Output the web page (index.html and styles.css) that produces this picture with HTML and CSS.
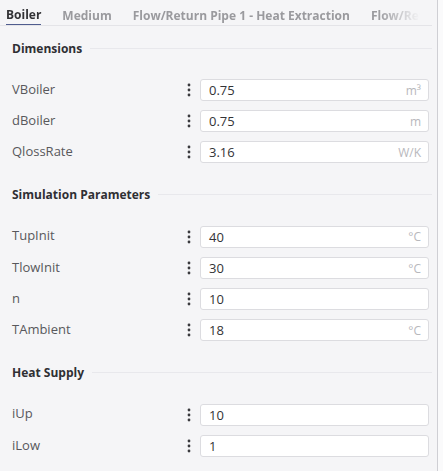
FILE: index.html
```html
<!DOCTYPE html>
<html>
<head>
<meta charset="utf-8">
<link rel="stylesheet" href="styles.css">
</head>
<body>
<div class="panel">
  <div class="tabbar">
    <div class="tabs">
      <span class="tab active">Boiler</span>
      <span class="tab">Medium</span>
      <span class="tab">Flow/Return Pipe 1 - Heat Extraction</span>
      <span class="tab last">Flow/Return Pipe 2 - Heat Supply</span>
    </div>
  </div>
  <div class="content">
    <section class="group">
      <h3 class="heading"><span>Dimensions</span></h3>
      <div class="rows">
        <div class="row"><span class="label">VBoiler</span><span class="dots"><svg width="6" height="14" viewBox="0 0 6 14"><circle cx="3" cy="2" r="1.4"/><circle cx="3" cy="7" r="1.4"/><circle cx="3" cy="12" r="1.4"/></svg></span><div class="field"><span class="val">0.75</span><span class="unit">m³</span></div></div>
        <div class="row"><span class="label">dBoiler</span><span class="dots"><svg width="6" height="14" viewBox="0 0 6 14"><circle cx="3" cy="2" r="1.4"/><circle cx="3" cy="7" r="1.4"/><circle cx="3" cy="12" r="1.4"/></svg></span><div class="field"><span class="val">0.75</span><span class="unit">m</span></div></div>
        <div class="row"><span class="label">QlossRate</span><span class="dots"><svg width="6" height="14" viewBox="0 0 6 14"><circle cx="3" cy="2" r="1.4"/><circle cx="3" cy="7" r="1.4"/><circle cx="3" cy="12" r="1.4"/></svg></span><div class="field"><span class="val">3.16</span><span class="unit">W/K</span></div></div>
      </div>
    </section>
    <section class="group">
      <h3 class="heading"><span>Simulation Parameters</span></h3>
      <div class="rows">
        <div class="row"><span class="label">TupInit</span><span class="dots"><svg width="6" height="14" viewBox="0 0 6 14"><circle cx="3" cy="2" r="1.4"/><circle cx="3" cy="7" r="1.4"/><circle cx="3" cy="12" r="1.4"/></svg></span><div class="field"><span class="val">40</span><span class="unit">°C</span></div></div>
        <div class="row"><span class="label">TlowInit</span><span class="dots"><svg width="6" height="14" viewBox="0 0 6 14"><circle cx="3" cy="2" r="1.4"/><circle cx="3" cy="7" r="1.4"/><circle cx="3" cy="12" r="1.4"/></svg></span><div class="field"><span class="val">30</span><span class="unit">°C</span></div></div>
        <div class="row"><span class="label">n</span><span class="dots"><svg width="6" height="14" viewBox="0 0 6 14"><circle cx="3" cy="2" r="1.4"/><circle cx="3" cy="7" r="1.4"/><circle cx="3" cy="12" r="1.4"/></svg></span><div class="field"><span class="val">10</span></div></div>
        <div class="row"><span class="label">TAmbient</span><span class="dots"><svg width="6" height="14" viewBox="0 0 6 14"><circle cx="3" cy="2" r="1.4"/><circle cx="3" cy="7" r="1.4"/><circle cx="3" cy="12" r="1.4"/></svg></span><div class="field"><span class="val">18</span><span class="unit">°C</span></div></div>
      </div>
    </section>
    <section class="group">
      <h3 class="heading"><span>Heat Supply</span></h3>
      <div class="rows">
        <div class="row"><span class="label">iUp</span><span class="dots"><svg width="6" height="14" viewBox="0 0 6 14"><circle cx="3" cy="2" r="1.4"/><circle cx="3" cy="7" r="1.4"/><circle cx="3" cy="12" r="1.4"/></svg></span><div class="field"><span class="val">10</span></div></div>
        <div class="row"><span class="label">iLow</span><span class="dots"><svg width="6" height="14" viewBox="0 0 6 14"><circle cx="3" cy="2" r="1.4"/><circle cx="3" cy="7" r="1.4"/><circle cx="3" cy="12" r="1.4"/></svg></span><div class="field"><span class="val">1</span></div></div>
      </div>
    </section>
  </div>
</div>
</body>
</html>
```
FILE: styles.css
```css
* { box-sizing: border-box; }
html, body { margin: 0; padding: 0; }
body {
  background: #fafafb;
  font-family: "Open Sans", "Noto Sans", sans-serif;
  width: 443px;
  height: 471px;
  overflow: hidden;
}
.panel {
  width: 438px;
  height: 471px;
  background: #f5f5f7;
  border-right: 1px solid #cfcfd4;
  padding-right: 5px;
}
.tabbar {
  height: 26px;
  border-bottom: 1px solid #e4e4e8;
  overflow: hidden;
}
.tabs {
  display: flex;
  gap: 21px;
  padding-left: 6px;
  white-space: nowrap;
  width: 420px;
  overflow: hidden;
  -webkit-mask-image: linear-gradient(to right, #000 calc(100% - 42px), transparent 100%);
  mask-image: linear-gradient(to right, #000 calc(100% - 42px), transparent 100%);
}
.tab {
  font-size: 12px;
  font-weight: 700;
  color: #9a9a9e;
  height: 26px;
  line-height: 32px;
  flex: none;
}
.tab.last {
  flex: 1 1 auto;
  min-width: 0;
  overflow: hidden;
}
.tab.active {
  color: #333336;
  border-bottom: 2px solid #4f5c8e;
  line-height: 30px;
}
.content {
  padding: 12px 0 0 12px;
}
.group { margin-bottom: 21.5px; }
.heading {
  margin: 0 0 21px 0;
  height: 20px;
  display: flex;
  align-items: center;
  gap: 8px;
  font-size: 12px;
  font-weight: 700;
  color: #2f2f33;
}
.heading::after {
  content: "";
  flex: 1;
  height: 1px;
  background: #e8e8ec;
}
.rows {
  display: flex;
  flex-direction: column;
  gap: 9.2px;
  padding-right: 3px;
}
.row {
  display: grid;
  grid-template-columns: 1fr 10px 229px;
  column-gap: 6px;
  align-items: center;
  height: 22px;
}
.label {
  font-size: 13px;
  color: #58585c;
  margin-bottom: 3px;
}
.dots {
  display: flex;
  justify-content: center;
  fill: #3a3a3e;
}
.dots svg { display: block; }
.field {
  height: 22px;
  background: #fff;
  border: 1px solid #dcdce0;
  border-radius: 3px;
  display: flex;
  align-items: center;
  justify-content: space-between;
  padding: 0 7px 0 8px;
}
.val {
  font-size: 13px;
  color: #333336;
}
.unit {
  font-size: 12px;
  color: #b8b8bc;
}
```
